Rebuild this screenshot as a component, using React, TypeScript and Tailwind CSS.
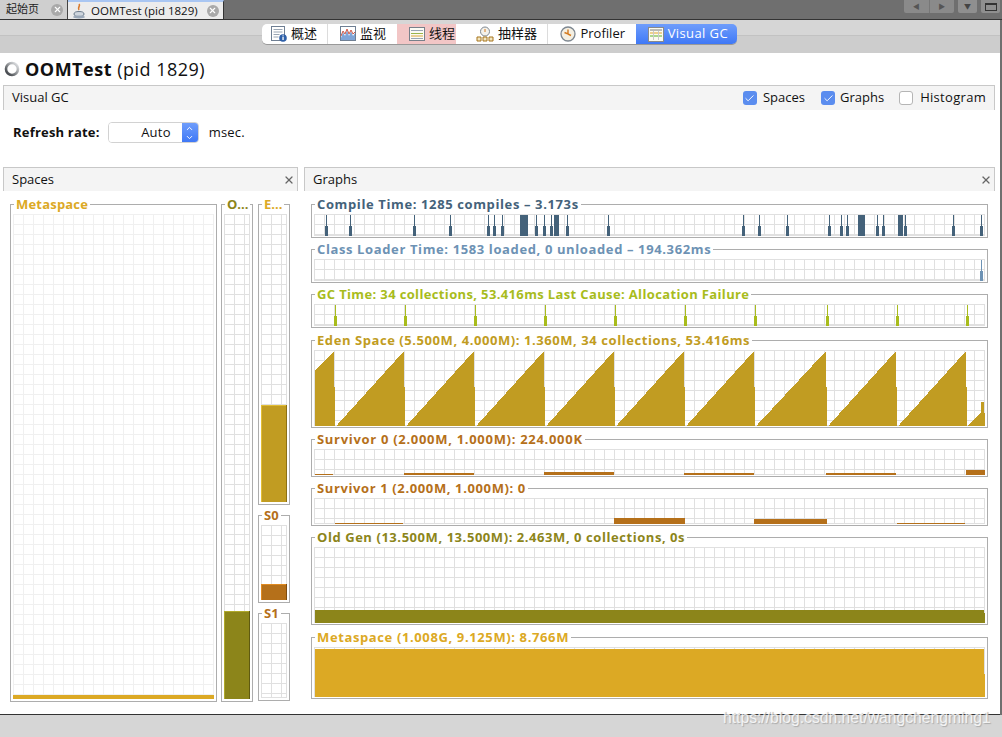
import type { ReactNode } from "react"
import { X, Check, ChevronUp, ChevronDown } from "lucide-react"

const GRID = "#e0e0e0"
const stack = "font-['Open_Sans','Noto_Sans_CJK_SC',sans-serif]"

// spike charts: [x, width] in page coords, the charts start at x=314
const compileSpikes: [number, number][] = [
  [325, 3], [349, 3], [413, 3], [449, 3], [487, 3], [493, 3], [501, 3], [520, 8], [535, 3], [543, 3], [550, 3], [554, 5], [566, 3], [607, 3],
  [742, 3], [758, 3], [786, 3], [828, 3], [840, 3], [846, 3], [858, 7], [876, 3], [882, 3], [898, 5], [904, 3], [952, 3], [980, 3],
]
const gcSpikes = [334, 404, 474, 544, 614, 684, 754, 826, 896, 966]
const edenPeaks = [404, 474, 544, 614, 684, 754, 826, 896, 966]

function edenPath() {
  const bottom = 426
  let d = `M315 ${bottom} L315 370 L334 351 L334 387 L335 387 L335 ${bottom} `
  let start = 336
  for (const p of edenPeaks) {
    d += `L${start} ${bottom} L${start + 2} 424 L${p} 351 L${p} 387 L${p + 1} 387 L${p + 1} ${bottom} `
    start = p + 2
  }
  d += `L968 ${bottom} L969 424 L978 415 L981 413 L981 402 L984 402 L984 413 L985 413 L985 ${bottom} Z`
  return d
}

function Grid({ id, x, y, w, h, color = GRID, children }: { id: string; x: number; y: number; w: number; h: number; color?: string; children?: ReactNode }) {
  return (
    <svg width={w} height={h} viewBox={`${x} ${y} ${w} ${h}`} className="block">
      <defs>
        <pattern id={id} x={x} y={y} width="10" height="10" patternUnits="userSpaceOnUse">
          <path d="M0.5 0V10M0 0.5H10" stroke={color} strokeWidth="1" fill="none" />
        </pattern>
      </defs>
      <rect x={x} y={y} width={w} height={h} fill={`url(#${id})`} />
      <rect x={x + 0.5} y={y + 0.5} width={w - 1} height={h - 1} fill="none" stroke={color} />
      {children}
    </svg>
  )
}

function Frame({ title, color, className, track = "tracking-[0.62px]", children }: { title: string; color: string; className: string; track?: string; children: ReactNode }) {
  return (
    <fieldset className={`border border-[#adadad] px-[2px] pt-[2px] pb-[1px] min-w-0 ${className}`}>
      <legend className={`ml-[1px] px-[2px] text-[13px] leading-[16px] font-bold whitespace-nowrap ${track}`} style={{ color }}>
        {title}
      </legend>
      {children}
    </fieldset>
  )
}

function Spikes({ id, y, h, items, color }: { id: string; y: number; h: number; items: [number, number][]; color: string }) {
  const mid = y + Math.round(h / 2)
  return (
    <Grid id={id} x={314} y={y} w={671} h={h}>
      {items.map(([x, w]) => (
        <g key={x} fill={color}>
          <rect x={x + (w > 3 ? 0 : 1)} y={y + 1} width={w > 3 ? w : 1} height={h - 2} />
          <rect x={x} y={mid + 1} width={w} height={y + h - mid - 1} />
        </g>
      ))}
    </Grid>
  )
}

function Bars({ id, y, h, items }: { id: string; y: number; h: number; items: [number, number, number][] }) {
  const bottom = y + h
  return (
    <Grid id={id} x={314} y={y} w={671} h={h}>
      {items.map(([x1, x2, t]) => (
        <rect key={x1} x={x1} y={bottom - t} width={x2 - x1} height={t} fill="#b5701a" />
      ))}
    </Grid>
  )
}

function SpaceBar({ id, w, h, fill, fillH, edge, dark }: { id: string; w: number; h: number; fill: string; fillH: number; edge: string; dark: string }) {
  return (
    <Grid id={id} x={0} y={0} w={w} h={h}>
      {fillH > 0 && (
        <>
          <rect x={0} y={h - fillH} width={w} height={fillH} fill={fill} />
          <rect x={0} y={h - fillH} width={1} height={fillH} fill={edge} />
          <rect x={0} y={h - fillH} width={w} height={1} fill={edge} />
          <rect x={w - 1} y={h - fillH} width={1} height={fillH} fill={dark} />
        </>
      )}
    </Grid>
  )
}

function PanelHeader({ title, width }: { title: string; width: string }) {
  return (
    <div className={`${width} h-[24px] bg-[#f4f4f4] border-t border-x border-[#c8c8c8] flex items-center justify-between pl-[8px] pr-[2px] text-[13px] text-[#111]`}>
      <span>{title}</span>
      <X size={12} strokeWidth={2.5} className="text-[#666]" />
    </div>
  )
}

function ToolIcon({ kind }: { kind: string }) {
  if (kind === "clock") {
    return (
      <svg width="16" height="16" viewBox="0 0 16 16">
        <circle cx="8" cy="8" r="7" fill="#f4efe2" stroke="#7d8791" strokeWidth="1.3" />
        <path d="M8 3.5V8L4.5 6.5M8 8L11 9.5" stroke="#d47a1e" strokeWidth="1.4" fill="none" />
      </svg>
    )
  }
  if (kind === "sampler") {
    return (
      <svg width="18" height="16" viewBox="0 0 18 16">
        <circle cx="9" cy="5.5" r="4.5" fill="#f4f1ea" stroke="#7d8791" />
        <path d="M9 3V6" stroke="#d47a1e" />
        <path d="M1 11h4v4H1zM7 11h4v4H7zM13 11h4v4h-4z" fill="#f2e6c0" stroke="#a7741c" />
      </svg>
    )
  }
  if (kind === "overview") {
    return (
      <svg width="16" height="16" viewBox="0 0 16 16">
        <rect x="0.5" y="0.5" width="13" height="14" fill="#fff" stroke="#6f7f93" />
        <path d="M2.5 3.5h9M2.5 6h9M2.5 8.5h6M2.5 11h5" stroke="#9aa6b4" />
        <circle cx="12" cy="12" r="3.8" fill="#2d5fa8" />
        <rect x="11.4" y="11" width="1.3" height="3" fill="#fff" />
        <rect x="11.4" y="9.4" width="1.3" height="1" fill="#fff" />
      </svg>
    )
  }
  if (kind === "monitor") {
    return (
      <svg width="16" height="16" viewBox="0 0 16 16">
        <rect x="0.5" y="0.5" width="15" height="14" fill="#fff" stroke="#6f7f93" />
        <path d="M1 12L3 6L5 10L7 4L9 10L11 5L13 10L15 7V14H1Z" fill="#7fa5d8" />
        <path d="M1 10L3 5L5 8L7 3L9 8L11 4L13 8L15 6" stroke="#d05a4a" fill="none" />
      </svg>
    )
  }
  if (kind === "threads") {
    return (
      <svg width="16" height="14" viewBox="0 0 16 14">
        <rect x="0.5" y="0.5" width="15" height="13" fill="#fbfbf4" stroke="#77808a" />
        <path d="M2 3.5H14" stroke="#9aa6b4" />
        <path d="M2 6.5H14" stroke="#9ab54a" />
        <path d="M2 9H14" stroke="#d8a63a" />
        <path d="M2 11.5H14" stroke="#9aa6b4" />
      </svg>
    )
  }
  return (
    <svg width="16" height="15" viewBox="0 0 16 15">
      <rect x="0.5" y="0.5" width="15" height="14" fill="#fbfbf0" stroke="#8a8a8a" />
      <path d="M2 3H14" stroke="#7d7d7d" />
      <path d="M2 6H14" stroke="#e0a52a" />
      <path d="M2 9H14" stroke="#58b22a" />
      <path d="M5.5 4V13M10.5 4V13" stroke="#c9c9c9" />
    </svg>
  )
}

const tools = [
  { kind: "overview", label: "概述", w: "w-[66px] pr-[10px] rounded-l-[5px] border-r border-[#dcdcdc] bg-white text-[#111]" },
  { kind: "monitor", label: "监视", w: "w-[69px] pr-[11px] bg-white text-[#111]" },
  { kind: "threads", label: "线程", w: "w-[59px] pr-[1px] bg-[#f2c6c6] text-[#111]" },
  { kind: "sampler", label: "抽样器", w: "w-[92px] pr-[10px] border-r border-[#dcdcdc] bg-white text-[#111]" },
  { kind: "clock", label: "Profiler", w: "w-[88px] pr-[11px] bg-white text-[#111]" },
  { kind: "gc", label: "Visual GC", w: "w-[101px] pr-[9px] rounded-r-[5px] bg-gradient-to-b from-[#6f9dfb] to-[#3f78f6] text-white tracking-[0.4px]" },
]

export default function App() {
  return (
    <div className={`relative w-[1002px] h-[737px] overflow-hidden bg-[#d6d6d6] flex flex-col ${stack}`}>
      {/* top tabs */}
      <div className="h-[20px] bg-[#6f6f6f] border-b border-[#333] flex items-stretch justify-between">
        <div className="flex items-stretch">
          <div className="w-[68px] bg-[#cfcfcf] border-r border-[#444] flex items-center pl-[6px] gap-[12px] text-[11px] text-[#222]">
            <span>起始页</span>
            <span className="w-[12px] h-[12px] rounded-full bg-[#a9a9a9] flex items-center justify-center"><X size={9} strokeWidth={3} className="text-white" /></span>
          </div>
          <div className="w-[156px] bg-[#ececec] border-t-2 border-t-[#a9c6f2] border-r border-r-[#333] flex items-center pl-[4px] text-[11.5px] text-[#111]">
            <svg width="14" height="16" viewBox="0 0 14 16" className="mr-[5px]">
              <path d="M7 1C9 3 5 4 7 7" stroke="#d9792b" strokeWidth="1.6" fill="none" />
              <ellipse cx="7" cy="11" rx="5" ry="2.5" fill="#cfd6de" stroke="#6c7c8c" />
              <ellipse cx="7" cy="14" rx="6" ry="1.5" fill="#9aa8b8" />
            </svg>
            <span>OOMTest (pid 1829)</span>
            <span className="ml-[9px] w-[12px] h-[12px] rounded-full bg-[#a9a9a9] flex items-center justify-center"><X size={9} strokeWidth={3} className="text-white" /></span>
          </div>
        </div>
        <div className="flex items-start gap-[4px] pr-[2px]">
          <div className="w-[50px] h-[13px] rounded-b-[2px] bg-[#8a8a8a] flex text-[#555] text-[7px] leading-[13px]">
            <span className="flex-1 text-center border-r border-[#777]">◀</span>
            <span className="flex-1 text-center">▶</span>
          </div>
          <div className="w-[19px] h-[13px] rounded-b-[2px] bg-[#8f8f8f] text-center text-[#444] text-[7px] leading-[13px]">▼</div>
          <div className="w-[19px] h-[13px] rounded-b-[2px] bg-[#8f8f8f] flex items-center justify-center">
            <div className="w-[12px] h-[8px] border border-[#333] border-t-2" />
          </div>
        </div>
      </div>

      {/* view switcher */}
      <div className="h-[33px] bg-[#cdcdcd] relative flex justify-center pt-[4px] pr-[3px]">
        <div className="absolute inset-x-0 top-0 h-[16px] bg-[#d6d6d6] border-b border-[#c2c2c2]" />
        <div className="relative z-10 flex h-[20px] rounded-[5px] shadow-[0_1px_0_#999]">
          {tools.map((t) => (
            <div key={t.label} className={`${t.w} flex items-center justify-end gap-[4px] text-[13px]`}>
              <ToolIcon kind={t.kind} />
              <span>{t.label}</span>
            </div>
          ))}
        </div>
      </div>

      {/* main white area */}
      <div className="h-[662px] w-[1000px] bg-white border-b border-[#333] flex flex-col">
        <div className="h-[32px] flex items-center pl-[4px] gap-[5px] text-[18px] tracking-[0.5px] text-[#111]">
          <svg width="16" height="16" viewBox="0 0 16 16">
            <defs>
              <linearGradient id="spin" gradientUnits="userSpaceOnUse" x1="2" y1="14" x2="14" y2="2">
                <stop offset="0" stopColor="#2f3338" />
                <stop offset="1" stopColor="#eceef0" />
              </linearGradient>
            </defs>
            <circle cx="8" cy="8" r="6" fill="none" stroke="url(#spin)" strokeWidth="2.6" />
          </svg>
          <span><b>OOMTest</b> (pid 1829)</span>
        </div>

        <div className="ml-[3px] w-[992px] h-[25px] bg-[#f4f4f4] border-t border-x border-[#c8c8c8] flex items-center justify-between pl-[8px] pr-[8px] text-[13px] text-[#111]">
          <span>Visual GC</span>
          <div className="flex items-center">
            <span className="w-[14px] h-[14px] rounded-[3px] bg-[#5b8def] flex items-center justify-center mr-[6px]"><Check size={11} strokeWidth={2} className="text-white" /></span>
            <span className="mr-[16px]">Spaces</span>
            <span className="w-[14px] h-[14px] rounded-[3px] bg-[#5b8def] flex items-center justify-center mr-[5px]"><Check size={11} strokeWidth={2} className="text-white" /></span>
            <span className="mr-[15px]">Graphs</span>
            <span className="w-[14px] h-[14px] rounded-[3px] bg-white border border-[#b5b5b5] mr-[7px]" />
            <span className="tracking-[0.3px]">Histogram</span>
          </div>
        </div>

        <div className="h-[45px] flex items-center pl-[13px] text-[13px] text-[#111]">
          <b className="mr-[8px] tracking-[0.2px]">Refresh rate:</b>
          <div className="w-[91px] h-[21px] flex rounded-[4px] border border-[#d2d2d2] overflow-hidden mr-[10px]">
            <div className="flex-1 bg-white text-right pr-[11px] leading-[19px] tracking-[0.2px]">Auto</div>
            <div className="w-[16px] bg-gradient-to-b from-[#6f9dfb] to-[#3f78f6] flex flex-col items-center justify-center text-white">
              <ChevronUp size={9} strokeWidth={2.5} />
              <ChevronDown size={9} strokeWidth={2.5} />
            </div>
          </div>
          <span className="mt-[1px] tracking-[0.2px]">msec.</span>
        </div>

        <div className="h-[12px]" />

        <div className="flex pl-[3px] gap-[6px]">
          {/* Spaces */}
          <div className="w-[295px]">
            <PanelHeader title="Spaces" width="w-full" />
            <div className="flex pl-[7px] pt-[5px] items-stretch">
              <Frame title="Metaspace" color="#dca924" track="tracking-[0.2px]" className="w-[207px] h-[506px] mr-[4px]">
                <Grid id="sm" x={0} y={0} w={201} h={485} color="#f0f0f0">
                  <rect x={0} y={481} width={201} height={4} fill="#dca924" />
                </Grid>
              </Frame>
              <Frame title="O..." color="#8c851a" track="tracking-[0px]" className="w-[32px] h-[506px] mr-[5px]">
                <SpaceBar id="so" w={26} h={485} fill="#8c851a" fillH={88} edge="#b0a92a" dark="#5f5a10" />
              </Frame>
              <div className="flex flex-col gap-[2px]">
                <Frame title="E..." color="#dca924" track="tracking-[0px]" className="w-[32px] h-[309px]">
                  <SpaceBar id="se" w={26} h={288} fill="#c19c22" fillH={97} edge="#e2bd35" dark="#8c7014" />
                </Frame>
                <Frame title="S0" color="#b5701a" track="tracking-[0px]" className="w-[32px] h-[96px]">
                  <SpaceBar id="s0" w={26} h={75} fill="#b5701a" fillH={16} edge="#e08a20" dark="#7d4c10" />
                </Frame>
                <Frame title="S1" color="#b5701a" track="tracking-[0px]" className="w-[32px] h-[96px]">
                  <SpaceBar id="s1" w={26} h={75} fill="#b5701a" fillH={0} edge="#e08a20" dark="#7d4c10" />
                </Frame>
              </div>
            </div>
          </div>

          {/* Graphs */}
          <div className="w-[691px]">
            <PanelHeader title="Graphs" width="w-full" />
            <div className="pl-[7px] pt-[5px] flex flex-col gap-[3px]">
              <Frame title="Compile Time: 1285 compiles – 3.173s" color="#44627a" className="w-[677px]">
                <Spikes id="g1" y={214} h={22} items={compileSpikes} color="#44627a" />
              </Frame>
              <Frame title="Class Loader Time: 1583 loaded, 0 unloaded – 194.362ms" color="#6d92b4" className="w-[677px]">
                <Spikes id="g2" y={259} h={22} items={[[980, 3]]} color="#6d92b4" />
              </Frame>
              <Frame title="GC Time: 34 collections, 53.416ms Last Cause: Allocation Failure" color="#a8bc1c" track="tracking-[0.36px]" className="w-[677px]">
                <Spikes id="g3" y={304} h={22} items={gcSpikes.map((x) => [x, 3] as [number, number])} color="#a8bc1c" />
              </Frame>
              <Frame title="Eden Space (5.500M, 4.000M): 1.360M, 34 collections, 53.416ms" color="#c19c22" track="tracking-[0.57px]" className="w-[677px] mt-[1px]">
                <Grid id="g4" x={314} y={350} w={671} h={76}>
                  <path d={edenPath()} fill="#c19c22" shapeRendering="crispEdges" />
                </Grid>
              </Frame>
              <Frame title="Survivor 0 (2.000M, 1.000M): 224.000K" color="#b5701a" track="tracking-[0.7px]" className="w-[677px]">
                <Bars id="g5" y={449} h={26} items={[[315, 333, 1], [404, 474, 2], [544, 614, 3], [684, 754, 2], [826, 896, 2], [966, 985, 5]]} />
              </Frame>
              <Frame title="Survivor 1 (2.000M, 1.000M): 0" color="#b5701a" className="w-[677px]">
                <Bars id="g6" y={498} h={26} items={[[335, 403, 1], [614, 685, 6], [754, 827, 5], [897, 965, 1]]} />
              </Frame>
              <Frame title="Old Gen (13.500M, 13.500M): 2.463M, 0 collections, 0s" color="#8c851a" track="tracking-[0.56px]" className="w-[677px]">
                <Grid id="g7" x={314} y={547} w={671} h={76}>
                  <rect x={315} y={610} width={669} height={13} fill="#8c851a" />
                  <rect x={984} y={613} width={1} height={10} fill="#8c851a" />
                </Grid>
              </Frame>
              <Frame title="Metaspace (1.008G, 9.125M): 8.766M" color="#dca924" className="w-[677px] mt-[1px]">
                <Grid id="g8" x={314} y={647} w={671} h={50}>
                  <rect x={315} y={649} width={669} height={48} fill="#dca924" />
                  <rect x={984} y={674} width={1} height={23} fill="#dca924" />
                </Grid>
              </Frame>
            </div>
          </div>
        </div>
      </div>

      <div className="absolute right-0 top-[20px] h-[695px] w-[2px] bg-[#6f6f6f]" />
      <div className="absolute left-[723px] top-[708px] text-[15.7px] leading-[20px] whitespace-nowrap text-white/80 font-['Liberation_Sans',sans-serif] [text-shadow:1px_1px_1px_#aaa]">
        https://blog.csdn.net/wangchengming1
      </div>
    </div>
  )
}
